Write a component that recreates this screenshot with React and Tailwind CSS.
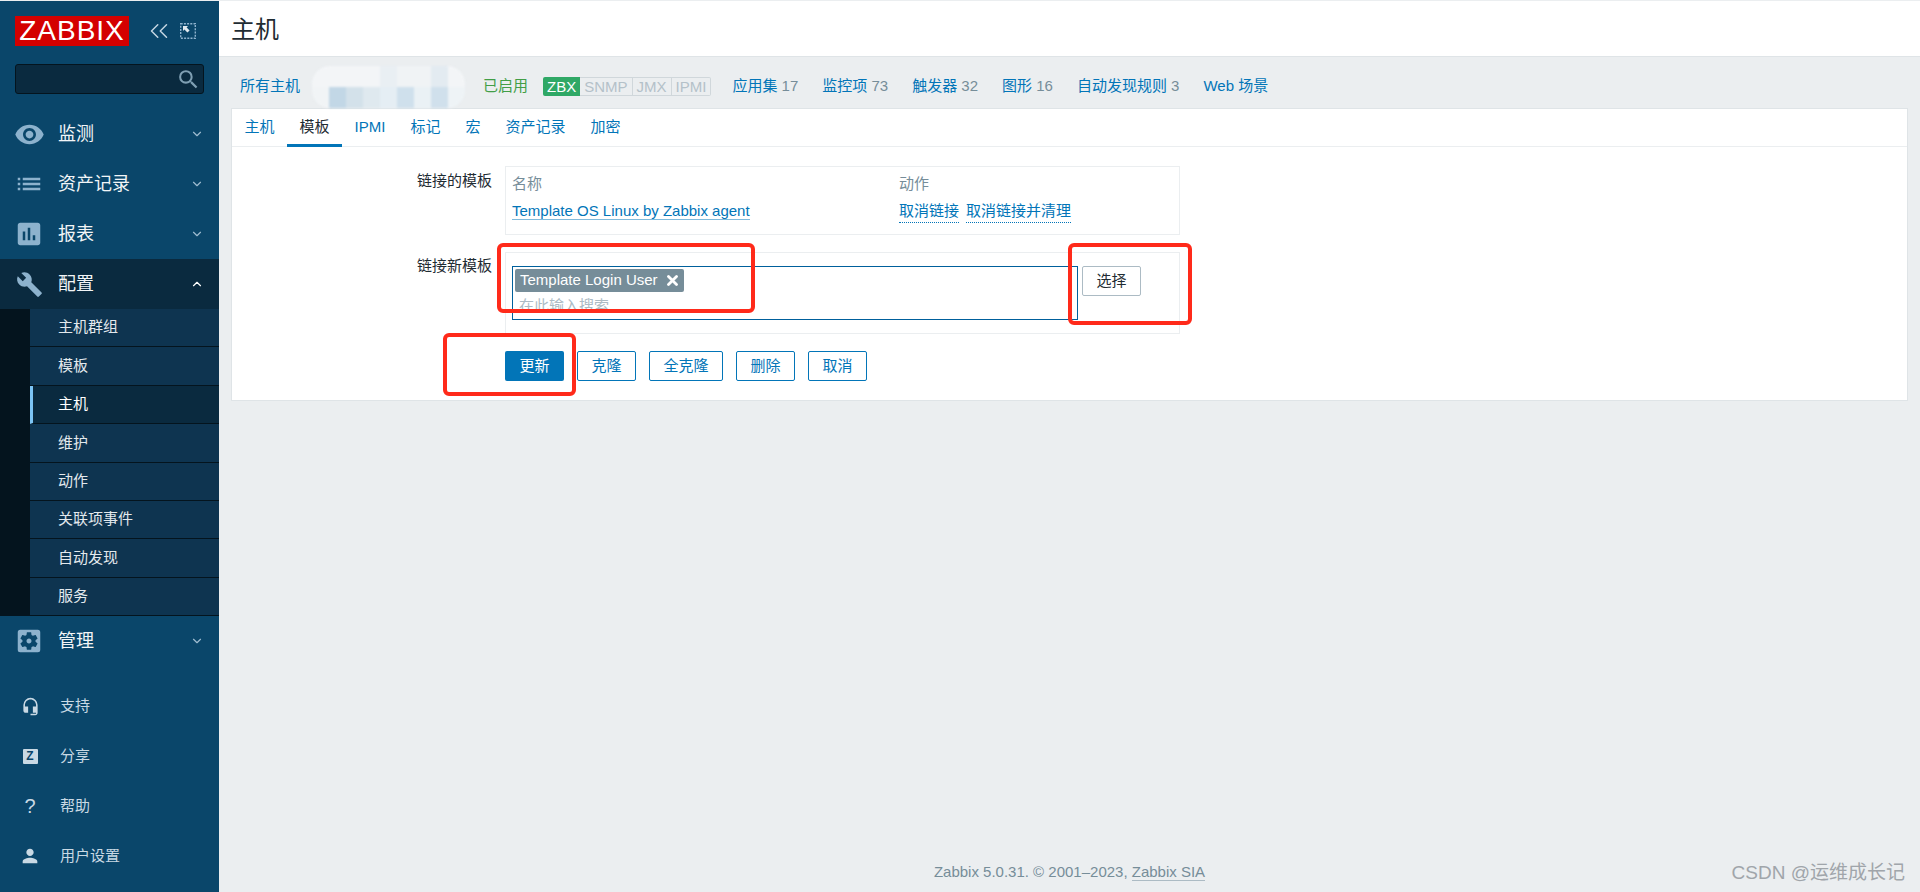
import React from 'react';
import { ChevronDown, ChevronUp, ChevronsLeft } from 'lucide-react';
import {
  MdVisibility,
  MdList,
  MdAssessment,
  MdBuild,
  MdSettingsApplications,
  MdHeadsetMic,
  MdPerson,
  MdSearch
} from 'react-icons/md';

const topMenu = [
  { label: '监测', Icon: MdVisibility, size: 31 },
  { label: '资产记录', Icon: MdList, size: 30 },
  { label: '报表', Icon: MdAssessment, size: 30 }
];

const subMenu = ['主机群组', '模板', '主机', '维护', '动作', '关联项事件', '自动发现', '服务'];

const hostLinks = [
  ['应用集', '17'],
  ['监控项', '73'],
  ['触发器', '32'],
  ['图形', '16'],
  ['自动发现规则', '3'],
  ['Web 场景', '']
];

const tabs = ['主机', '模板', 'IPMI', '标记', '宏', '资产记录', '加密'];

const blurCells = [
  'bg-[#f3f5f7]', 'bg-[#f3f5f7]', 'bg-[#f3f5f7]', 'bg-[#f3f5f7]', 'bg-[#e9eff3]', 'bg-[#f0f3f5]', 'bg-[#f0f3f5]', 'bg-[#e3ebf1]', 'bg-[#f3f5f7]',
  'bg-[#f1f4f6]', 'bg-[#c2d7e6]', 'bg-[#d3e1ea]', 'bg-[#dfe9ef]', 'bg-[#e5eef4]', 'bg-[#cfe0ec]', 'bg-[#eaf1f5]', 'bg-[#d0e0ec]', 'bg-[#eef3f6]'
];

function MenuRow({ label, Icon, size, active, open }) {
  const Chevron = open ? ChevronUp : ChevronDown;
  return (
    <div className={`h-[50px] flex items-center shrink-0 ${active ? 'bg-[#0a2a3f]' : ''}`}>
      <div className="w-[58px] flex justify-center shrink-0">
        <Icon style={{ fontSize: size }} className="text-[#8db2cd]" />
      </div>
      <span className="text-[18px] text-[#f2f5f7] flex-1">{label}</span>
      <Chevron className={`w-[14px] h-[14px] mr-[15px] ${open ? 'text-white' : 'text-[#9fbcd0]'}`} strokeWidth={2} />
    </div>
  );
}

function BottomRow({ label, children }) {
  return (
    <div className="h-[50px] flex items-center">
      <div className="w-[60px] flex justify-center shrink-0">{children}</div>
      <span className="text-[15px] text-[#c9d9e4]">{label}</span>
    </div>
  );
}

function Sidebar() {
  return (
    <aside className="w-[219px] shrink-0 bg-[#0a466a] flex flex-col">
      <div className="pl-[15px] pt-[15px] h-[63px] shrink-0">
        <div className="h-[30px] flex items-center">
          <div className="w-[114px] h-[30px] bg-[#d40000] text-white text-[28px] leading-[30px] text-center tracking-[1px]">ZABBIX</div>
          <ChevronsLeft className="w-[30px] h-[30px] ml-[15px] text-[#c5d6e2]" strokeWidth={1.2} />
          <svg className="ml-[6px]" width="16" height="16" viewBox="0 0 16 16" fill="none">
            <rect x="0.7" y="0.7" width="14.6" height="14.6" stroke="#8db2cd" strokeWidth="1.4" strokeDasharray="2 1.2" />
            <path d="M3 3h5L6.6 4.4l3 3-2.2 2.2-3-3L3 8z" fill="#dfe8ee" />
          </svg>
        </div>
      </div>
      <div className="mx-[15px] h-[30px] shrink-0 rounded-[3px] bg-[#0a2a3f] border border-[#04141e] flex items-center justify-end pr-[2px]">
        <MdSearch className="text-[#7f9fb3] text-[25px]" />
      </div>
      <div className="mt-[15px]">
        {topMenu.map(m => <MenuRow key={m.label} {...m} />)}
        <MenuRow label="配置" Icon={MdBuild} size={27} active open />
      </div>
      <div className="bg-[#04141e] pl-[30px] shrink-0">
        {subMenu.map(s => (
          <div
            key={s}
            className={`h-[38.4px] flex items-center text-[15px] pl-[28px] border-b border-[#04141e] ${
              s === '主机'
                ? 'bg-[#0a2a3f] text-white border-l-[3px] border-l-[#7cc4f5] !pl-[25px]'
                : 'bg-[#0e3450] text-[#e3e9ed]'
            }`}
          >
            {s}
          </div>
        ))}
      </div>
      <MenuRow label="管理" Icon={MdSettingsApplications} size={30} />
      <div className="mt-[15px]">
        <BottomRow label="支持"><MdHeadsetMic className="text-[19px] text-[#c9d9e4]" /></BottomRow>
        <BottomRow label="分享">
          <span className="w-[15px] h-[15px] rounded-[1px] bg-[#c9d9e4] text-[#0a466a] text-[12px] leading-[15px] font-bold text-center">Z</span>
        </BottomRow>
        <BottomRow label="帮助"><span className="text-[20px] leading-none text-[#c9d9e4]">?</span></BottomRow>
        <BottomRow label="用户设置"><MdPerson className="text-[22px] text-[#c9d9e4]" /></BottomRow>
      </div>
    </aside>
  );
}

function HostNav() {
  return (
    <div className="h-[51px] flex items-center pl-[9px] pt-[8px] text-[15px] shrink-0">
      <span className="text-[#0275b8]">所有主机</span>
      <div className="ml-[12px] w-[153px] h-[42px] rounded-[18px] overflow-hidden grid grid-cols-9 blur-[1px]">
        {blurCells.map((c, i) => <div key={i} className={c} />)}
      </div>
      <span className="ml-[18px] text-[#429e47]">已启用</span>
      <div className="ml-[15px] h-[19px] flex text-[15px] leading-[19px] text-[#b4c1c9]">
        <span className="px-[4px] bg-[#2fa866] text-white rounded-l-[2px]">ZBX</span>
        <span className="px-[4px] border-y border-r border-[#d0d7db] leading-[17px]">SNMP</span>
        <span className="px-[4px] border-y border-r border-[#d0d7db] leading-[17px]">JMX</span>
        <span className="px-[4px] border-y border-r border-[#d0d7db] rounded-r-[2px] leading-[17px]">IPMI</span>
      </div>
      <div className="ml-[21px] flex gap-[24px]">
        {hostLinks.map(([name, count]) => (
          <span key={name}>
            <span className="text-[#0275b8]">{name}</span>
            {count && <span className="text-[#768d99]"> {count}</span>}
          </span>
        ))}
      </div>
    </div>
  );
}

function OutlineButton({ children, w }) {
  return (
    <button className={`h-[30px] ${w} rounded-[2px] border border-[#0275b8] text-[15px] text-[#0275b8] bg-white`}>
      {children}
    </button>
  );
}

function TemplateForm() {
  return (
    <div className="pt-[19px] pl-[272px]">
      <div className="flex">
        <div className="w-[259px] shrink-0 -ml-[259px] pr-[13px] pt-[4px] text-right text-[15px] text-[#1f2c33]">链接的模板</div>
        <div className="w-[675px] h-[69px] border border-[#ebeef0] pl-[6px] pt-[4px] flex text-[15px]">
          <div className="w-[387px] shrink-0">
            <div className="text-[#768d99] h-[25px] leading-[25px]">名称</div>
            <div className="mt-[2px] h-[25px] leading-[25px]">
              <span className="text-[#0275b8] border-b border-[#0275b8]/50">Template OS Linux by Zabbix agent</span>
            </div>
          </div>
          <div>
            <div className="text-[#768d99] h-[25px] leading-[25px]">动作</div>
            <div className="mt-[2px] h-[25px] leading-[25px] flex gap-[7px] text-[#0275b8]">
              <span className="border-b border-dotted border-[#0275b8]">取消链接</span>
              <span className="border-b border-dotted border-[#0275b8]">取消链接并清理</span>
            </div>
          </div>
        </div>
      </div>
      <div className="flex mt-[17px]">
        <div className="w-[259px] shrink-0 -ml-[259px] pr-[13px] pt-[3px] text-right text-[15px] text-[#1f2c33]">链接新模板</div>
        <div className="w-[675px] h-[82px] border border-[#ebeef0] pl-[6px] pt-[13px] flex items-start">
          <div className="w-[566px] h-[54px] border border-[#00609c] pl-[2px] pt-[2px] overflow-hidden shrink-0">
            <div className="h-[23px] w-[169px] bg-[#768d99] rounded-[2px] flex items-center pl-[5px] text-[15px] text-white">
              Template Login User
              <svg className="ml-[9px]" width="11" height="11" viewBox="0 0 11 11">
                <path d="M1.5 1.5l8 8M9.5 1.5l-8 8" stroke="#ffffff" strokeWidth="2.8" strokeLinecap="round" />
              </svg>
            </div>
            <div className="pl-[4px] mt-[2px] text-[15px] leading-[24px] text-[#acbbc4]">在此输入搜索</div>
          </div>
          <button className="ml-[4px] w-[59px] h-[30px] rounded-[2px] border border-[#acbbc4] text-[15px] text-[#1f2c33] bg-white">选择</button>
        </div>
      </div>
      <div className="flex gap-[13px] mt-[17px]">
        <button className="h-[30px] w-[59px] rounded-[2px] bg-[#0275b8] text-white text-[15px]">更新</button>
        <OutlineButton w="w-[59px]">克隆</OutlineButton>
        <OutlineButton w="w-[74px]">全克隆</OutlineButton>
        <OutlineButton w="w-[59px]">删除</OutlineButton>
        <OutlineButton w="w-[59px]">取消</OutlineButton>
      </div>
    </div>
  );
}

export default function App() {
  return (
    <div className="relative h-[892px] w-[1920px] overflow-hidden bg-[#ebeef0] pt-[1px] flex font-['Liberation_Sans','Noto_Sans_CJK_SC',sans-serif]">
      <Sidebar />
      <main className="flex-1 flex flex-col min-w-0">
        <header className="h-[56px] shrink-0 bg-white border-b border-[#dfe4e7] flex items-center pl-[12px] pt-[2px] text-[24px] text-[#1f2c33]">主机</header>
        <div className="px-[12px] flex-1 flex flex-col">
          <HostNav />
          <section className="h-[293px] bg-white border border-[#dfe4e7] shrink-0">
            <div className="h-[38px] flex border-b border-[#ebeef0] text-[15px]">
              {tabs.map(t => (
                <div
                  key={t}
                  className={`h-[38px] px-[12.5px] leading-[35px] ${t === '模板' ? 'text-[#1f2c33] border-b-[3px] border-[#0275b8]' : 'text-[#0275b8]'}`}
                >
                  {t}
                </div>
              ))}
            </div>
            <div className="pl-[1px]">
              <TemplateForm />
            </div>
          </section>
          <footer className="mt-auto h-[31px] text-center text-[15px] text-[#768d99]">
            Zabbix 5.0.31. © 2001–2023, <span className="border-b border-[#acbbc4]">Zabbix SIA</span>
          </footer>
        </div>
      </main>

      <div className="absolute left-[497px] top-[243px] w-[258px] h-[70px] border-[4px] border-[#ff2a1a] rounded-[6px]" />
      <div className="absolute left-[1068px] top-[243px] w-[124px] h-[82px] border-[4px] border-[#ff2a1a] rounded-[6px]" />
      <div className="absolute left-[443px] top-[333px] w-[133px] h-[63px] border-[4px] border-[#ff2a1a] rounded-[6px]" />
      <div className="absolute right-[15px] bottom-[5px] text-[19px] text-[#a0a5aa]">CSDN @运维成长记</div>
    </div>
  );
}
